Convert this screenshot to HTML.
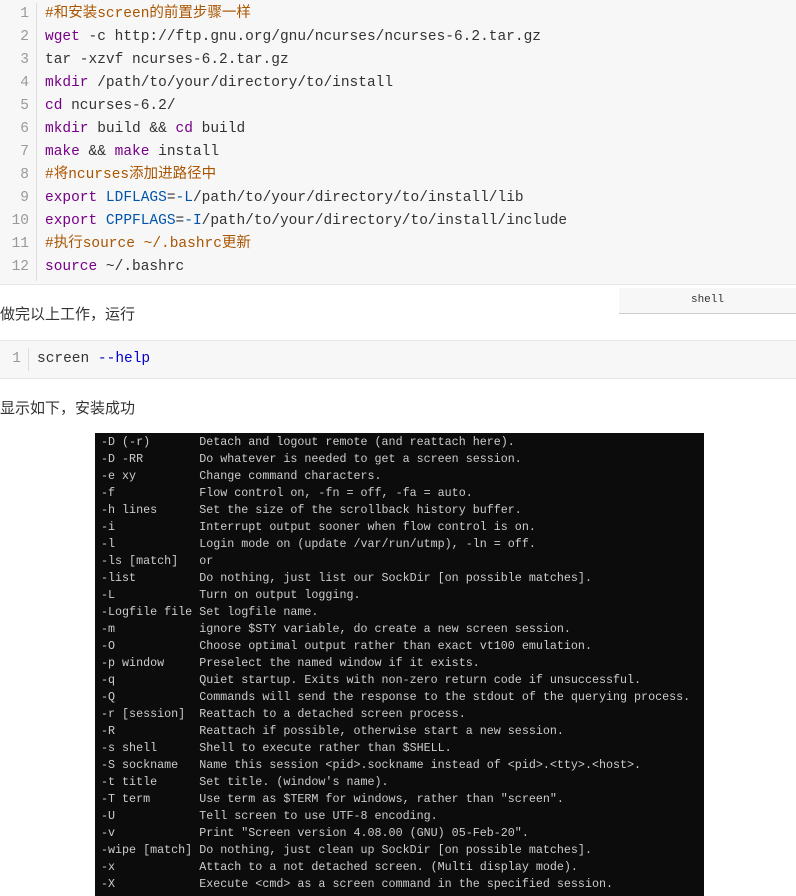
<!DOCTYPE html>
<html><head><meta charset="utf-8"><style>
body{margin:0;width:796px;height:896px;overflow:hidden;background:#fff;position:relative;font-family:"Liberation Sans","Noto Sans CJK SC",sans-serif;}
.cb{position:absolute;left:0;width:796px;background:#f7f7f7;border:1px solid #e7e7e7;border-left:none;border-right:none;box-sizing:border-box;}
.ln{position:absolute;left:0;width:36px;border-right:1px solid #ddd;}
.ln div{text-align:right;padding-right:7px;color:#999;font:14.5px/23px "Liberation Mono","Noto Sans CJK SC",monospace;height:23px;}
.code{position:absolute;left:45px;font:14.5px/23px "Liberation Mono","Noto Sans CJK SC",monospace;color:#333;white-space:pre;}
.k{color:#770088}.c{color:#aa5500}.b{color:#0000cc}.v{color:#0055aa}
.p{position:absolute;left:0;font-size:15px;color:#333;}
.term{position:absolute;left:95px;top:433px;width:609px;height:463px;background:#0c0c0c;}
.term pre{margin:0;position:absolute;left:6px;top:1px;font:11.7px/17px "Liberation Mono",monospace;color:#cccccc;}
</style></head><body>
<div class="cb" style="top:-1px;height:286px;">
<div class="ln" style="top:3px;height:278px;"><div>1</div><div>2</div><div>3</div><div>4</div><div>5</div><div>6</div><div>7</div><div>8</div><div>9</div><div>10</div><div>11</div><div>12</div></div>
<div class="code" style="top:3px;"><span class="c">#和安装screen的前置步骤一样</span>
<span class="k">wget</span> -c http://ftp.gnu.org/gnu/ncurses/ncurses-6.2.tar.gz
tar -xzvf ncurses-6.2.tar.gz
<span class="k">mkdir</span> /path/to/your/directory/to/install
<span class="k">cd</span> ncurses-6.2/
<span class="k">mkdir</span> build &amp;&amp; <span class="k">cd</span> build
<span class="k">make</span> &amp;&amp; <span class="k">make</span> install
<span class="c">#将ncurses添加进路径中</span>
<span class="k">export</span> <span class="v">LDFLAGS</span>=<span class="v">-L</span>/path/to/your/directory/to/install/lib
<span class="k">export</span> <span class="v">CPPFLAGS</span>=<span class="v">-I</span>/path/to/your/directory/to/install/include
<span class="c">#执行source ~/.bashrc更新</span>
<span class="k">source</span> ~/.bashrc</div>
</div>
<div style="position:absolute;left:619px;top:288px;width:177px;height:26px;background:#f7f7f7;border-bottom:1px solid #ccc;box-sizing:border-box;text-align:center;font:11px/24px 'Liberation Mono',monospace;color:#333;">shell</div>
<div class="p" style="top:303px;">做完以上工作，运行</div>
<div class="cb" style="top:340px;height:39px;">
<div class="ln" style="top:7px;height:23px;width:28px;"><div>1</div></div>
<div class="code" style="top:7px;left:37px;">screen <span class="b">--help</span></div>
</div>
<div class="p" style="top:397px;">显示如下，安装成功</div>
<div class="term"><pre>-D (-r)       Detach and logout remote (and reattach here).
-D -RR        Do whatever is needed to get a screen session.
-e xy         Change command characters.
-f            Flow control on, -fn = off, -fa = auto.
-h lines      Set the size of the scrollback history buffer.
-i            Interrupt output sooner when flow control is on.
-l            Login mode on (update /var/run/utmp), -ln = off.
-ls [match]   or
-list         Do nothing, just list our SockDir [on possible matches].
-L            Turn on output logging.
-Logfile file Set logfile name.
-m            ignore $STY variable, do create a new screen session.
-O            Choose optimal output rather than exact vt100 emulation.
-p window     Preselect the named window if it exists.
-q            Quiet startup. Exits with non-zero return code if unsuccessful.
-Q            Commands will send the response to the stdout of the querying process.
-r [session]  Reattach to a detached screen process.
-R            Reattach if possible, otherwise start a new session.
-s shell      Shell to execute rather than $SHELL.
-S sockname   Name this session &lt;pid&gt;.sockname instead of &lt;pid&gt;.&lt;tty&gt;.&lt;host&gt;.
-t title      Set title. (window's name).
-T term       Use term as $TERM for windows, rather than "screen".
-U            Tell screen to use UTF-8 encoding.
-v            Print "Screen version 4.08.00 (GNU) 05-Feb-20".
-wipe [match] Do nothing, just clean up SockDir [on possible matches].
-x            Attach to a not detached screen. (Multi display mode).
-X            Execute &lt;cmd&gt; as a screen command in the specified session.</pre></div>
</body></html>
